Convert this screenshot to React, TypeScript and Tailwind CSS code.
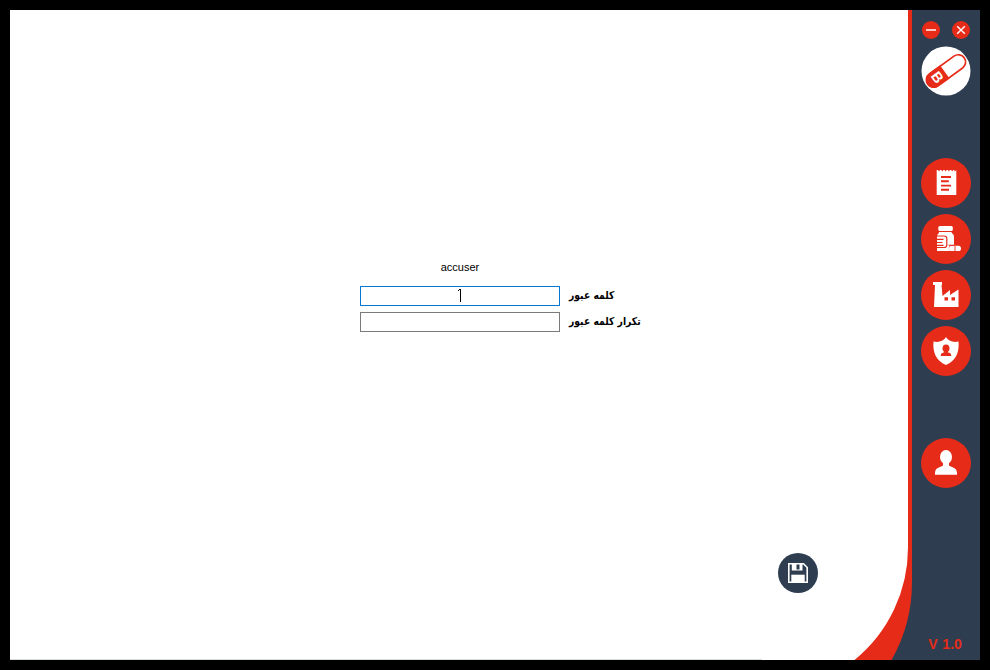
import React from "react";

type IconProps = { children: React.ReactNode; label: string };

function NavButton({ children, label }: IconProps) {
  return (
    <button aria-label={label} className="block h-[50px] w-[50px] shrink-0">
      <svg viewBox="0 0 50 50" className="block h-[50px] w-[50px]">
        <circle cx="25" cy="25" r="25" fill="#e62b19" />
        {children}
      </svg>
    </button>
  );
}

function Backdrop() {
  return (
    <svg viewBox="0 0 970 650" className="absolute inset-0 h-[650px] w-[970px]">
      <rect width="970" height="650" fill="#2e3e50" />
      <path d="M898 0H902V572A158 158 0 0 1 881.500 650H840V530H898Z" fill="#e62b19" />
      <path d="M0 0H898V537A145 145 0 0 1 844.500 650H0Z" fill="#fff" />
      <rect x="0" y="649" width="752" height="1" fill="#d5dcd9" />
    </svg>
  );
}

function Logo() {
  return (
    <svg viewBox="0 0 50 50" className="block h-[50px] w-[50px]">
      <circle cx="25" cy="25" r="24.500" fill="#fff" />
      <g transform="translate(25 25) rotate(-36)">
        <rect x="-22.500" y="-7.300" width="45" height="14.600" rx="7.300" fill="#fff" stroke="#e62b19" strokeWidth="1.700" />
        <path d="M-1.500 -8.100H-15A8.100 8.100 0 0 0 -15 8.100H-1.500Z" fill="#e62b19" />
        <text transform="translate(-10.500 0) rotate(90)" y="5.200" textAnchor="middle" fontSize="14.500" fontWeight="700" fill="#fff" className="[font-family:'Liberation_Sans',sans-serif]">B</text>
      </g>
    </svg>
  );
}

function Sidebar() {
  return (
    <aside className="flex w-[68px] shrink-0 flex-col items-center">
      <div className="mt-[11px] flex gap-3">
        <button aria-label="Minimize">
          <svg viewBox="0 0 18 18" className="block h-[18px] w-[18px]">
            <circle cx="9" cy="9" r="9" fill="#e62b19" />
            <path d="M4 9H14" stroke="#fbc6c0" strokeWidth="2" />
          </svg>
        </button>
        <button aria-label="Close">
          <svg viewBox="0 0 18 18" className="block h-[18px] w-[18px]">
            <circle cx="9" cy="9" r="9" fill="#e62b19" />
            <path d="M5.200 5.200L12.800 12.800M12.800 5.200L5.200 12.800" stroke="#fff" strokeWidth="1.400" />
          </svg>
        </button>
      </div>
      <div className="mt-[7px]"><Logo /></div>
      <nav className="mt-[62px] flex flex-col gap-1.5">
        <NavButton label="Prescriptions">
          <path d="M15.700 12H17L18 13.500L19 12H20.300L21.300 13.500L22.300 12H23.600L24.600 13.500L25.600 12H26.900L27.900 13.500L28.900 12H30.200L31.200 13.500L32.200 12H33L34 13.500L35.300 12V37H15.700Z" fill="#fff" />
          <path d="M20 19H30M20 23.300H27.800M20 27.600H30M20 31.800H28" stroke="#e62b19" strokeWidth="1.900" />
        </NavButton>
        <NavButton label="Medicines">
          <rect x="17.300" y="12" width="14.500" height="5" rx="1.500" fill="#fff" />
          <path d="M18 18H30.500C31 20 33 20 33 22.500V31H30C27 31 27 37 30 37H16V22.500C16 20 18 20 18 18Z" fill="#fff" />
          <path d="M15.500 22H23Q25.800 22 25.800 24.500V31Q25.800 33.500 23 33.500H15.500M16 25.300H22.500M16 28.500H21.500M16 31.300H22.500" fill="none" stroke="#e62b19" strokeWidth="1.200" />
          <rect x="28" y="31.700" width="12" height="5.300" rx="2.600" fill="#fff" />
          <path d="M34 32V37M27.500 31.200H33" stroke="#e62b19" strokeWidth="0.900" />
        </NavButton>
        <NavButton label="Manufacturers">
          <path d="M12 12H21V15H20.500L21.500 26L29 20V25L37.500 19.500V37H13L14 15H12Z" fill="#fff" />
          <path d="M23.500 27.300H27V30.500H23.500ZM30.500 27.300H34V30.500H30.500Z" fill="#e62b19" />
        </NavButton>
        <NavButton label="Security">
          <path d="M25 11C27 14.500 32 17 37.500 15.500C38.500 26 35 35 25 39C15 35 11.500 26 12.500 15.500C18 17 23 14.500 25 11Z" fill="#fff" />
          <ellipse cx="25" cy="22.300" rx="3.500" ry="3.900" fill="#e62b19" />
          <path d="M23.300 25H26.700V26.300C28.800 26.800 30.300 27.300 30.300 30H19.700C19.700 27.300 21.200 26.800 23.300 26.300Z" fill="#e62b19" />
        </NavButton>
      </nav>
      <div className="mt-[62px]">
        <NavButton label="User">
          <ellipse cx="25" cy="19" rx="6" ry="7" fill="#fff" />
          <path d="M22 23H28V27.500C31 29.500 35.500 29.500 36 34.500V36.700H14V34.500C14.500 29.500 19 29.500 22 27.500Z" fill="#fff" />
        </NavButton>
      </div>
      <div className="mt-auto mb-[6px] pr-0.5 text-[14px] leading-5 font-bold whitespace-nowrap text-[#e62b19] [font-family:'Liberation_Sans',sans-serif] [word-spacing:1px]">V 1.0</div>
    </aside>
  );
}

function Caret() {
  return (
    <svg viewBox="0 0 3 13" className="mr-0.5 mb-0.5 block h-[13px] w-[3px]" shapeRendering="crispEdges">
      <path d="M1 0H3V13H2V1H1ZM0 1H1V2H0Z" fill="#000" />
    </svg>
  );
}

function Field({ label, focused = false, borderClass }: { label: string; focused?: boolean; borderClass: string }) {
  return (
    <div className="flex h-5 items-center gap-[9px]">
      <div className={`flex h-5 w-[200px] items-center justify-center border bg-white ${borderClass}`}>{focused && <Caret />}</div>
      <span dir="rtl" className="origin-left scale-x-[0.84] whitespace-nowrap text-[11px] leading-5 font-bold [font-family:'DejaVu_Sans',sans-serif]">{label}</span>
    </div>
  );
}

export default function App() {
  return (
    <div className="h-[670px] w-[990px] overflow-hidden bg-black p-2.5">
      <div className="relative h-[650px] w-[970px] overflow-hidden">
        <Backdrop />
        <div className="relative flex h-[650px]">
          <main className="flex w-[902px] flex-col pl-[350px] text-black">
            <div className="mt-[247px] w-[200px] text-center text-[11px] leading-5 [font-family:'Liberation_Sans',sans-serif]">accuser</div>
            <div className="mt-[9px] flex flex-col gap-1.5">
              <Field label="کلمه عبور" focused borderClass="border-[#0078d7]" />
              <Field label="تکرار کلمه عبور" borderClass="border-[#7a7a7a]" />
            </div>
            <button aria-label="Save" className="mt-[221px] ml-[418px] h-10 w-10">
              <svg viewBox="0 0 40 40" className="block h-10 w-10">
                <circle cx="20" cy="20" r="20" fill="#2e3e50" />
                <path d="M10.800 10.800H25.500L29.200 14.500V29.200H10.800Z" fill="none" stroke="#fff" strokeWidth="1.600" />
                <path d="M13.800 10.500H24.500V17.500H13.800Z" fill="#fff" />
                <path d="M18.500 11.500H21.500V16.500H18.500Z" fill="#2e3e50" />
                <path d="M13.300 21.700H26.700V29.500H13.300Z" fill="#fff" />
              </svg>
            </button>
          </main>
          <Sidebar />
        </div>
      </div>
    </div>
  );
}
